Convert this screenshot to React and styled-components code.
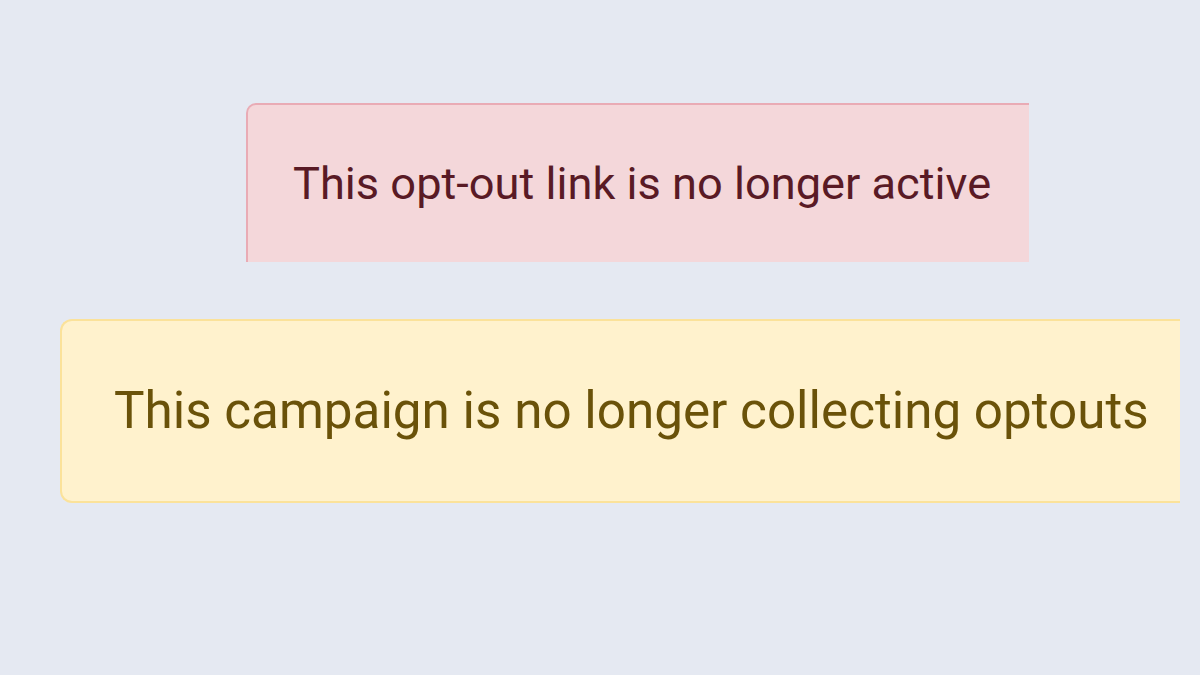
import React from 'react'
import styled, { createGlobalStyle } from 'styled-components'

const Global = createGlobalStyle`
	html, body {
		margin: 0;
		padding: 0;
		background: #e5e9f2;
	}
	body {
		font-family: Roboto, "Liberation Sans", sans-serif;
	}
`

const Page = styled.div`
	width: 1200px;
	height: 675px;
	overflow: hidden;
	display: flex;
	flex-direction: column;
	padding-top: 103px;
	box-sizing: border-box;
`

const Alert = styled.div`
	display: flex;
	align-items: center;
	box-sizing: border-box;
	margin-left: ${p => p.left}px;
	width: ${p => p.width}px;
	height: ${p => p.height}px;
	margin-top: ${p => p.top || 0}px;
	background: ${p => (p.kind === 'danger' ? '#f4d7da' : '#fff2cd')};
	color: ${p => (p.kind === 'danger' ? '#591a25' : '#6a5209')};
	border: 2px solid ${p => (p.kind === 'danger' ? '#e9abb5' : '#fbe29a')};
	border-right: none;
	border-bottom: ${p => (p.kind === 'danger' ? 'none' : undefined)};
	border-radius: ${p => (p.kind === 'danger' ? '10px 0 0 0' : '12px 0 0 12px')};
	padding-left: ${p => p.pad}px;
	font-size: ${p => p.size}px;
	line-height: 1;
	white-space: nowrap;
`

export default function App() {
	return (
		<>
			<Global />
			<Page>
				<Alert kind="danger" left={246} width={783} height={159} pad={45} size={45.2}>
					This opt-out link is no longer active
				</Alert>
				<Alert kind="warning" left={60} width={1120} height={184} top={57} pad={52} size={51.2}>
					This campaign is no longer collecting optouts
				</Alert>
			</Page>
		</>
	)
}
